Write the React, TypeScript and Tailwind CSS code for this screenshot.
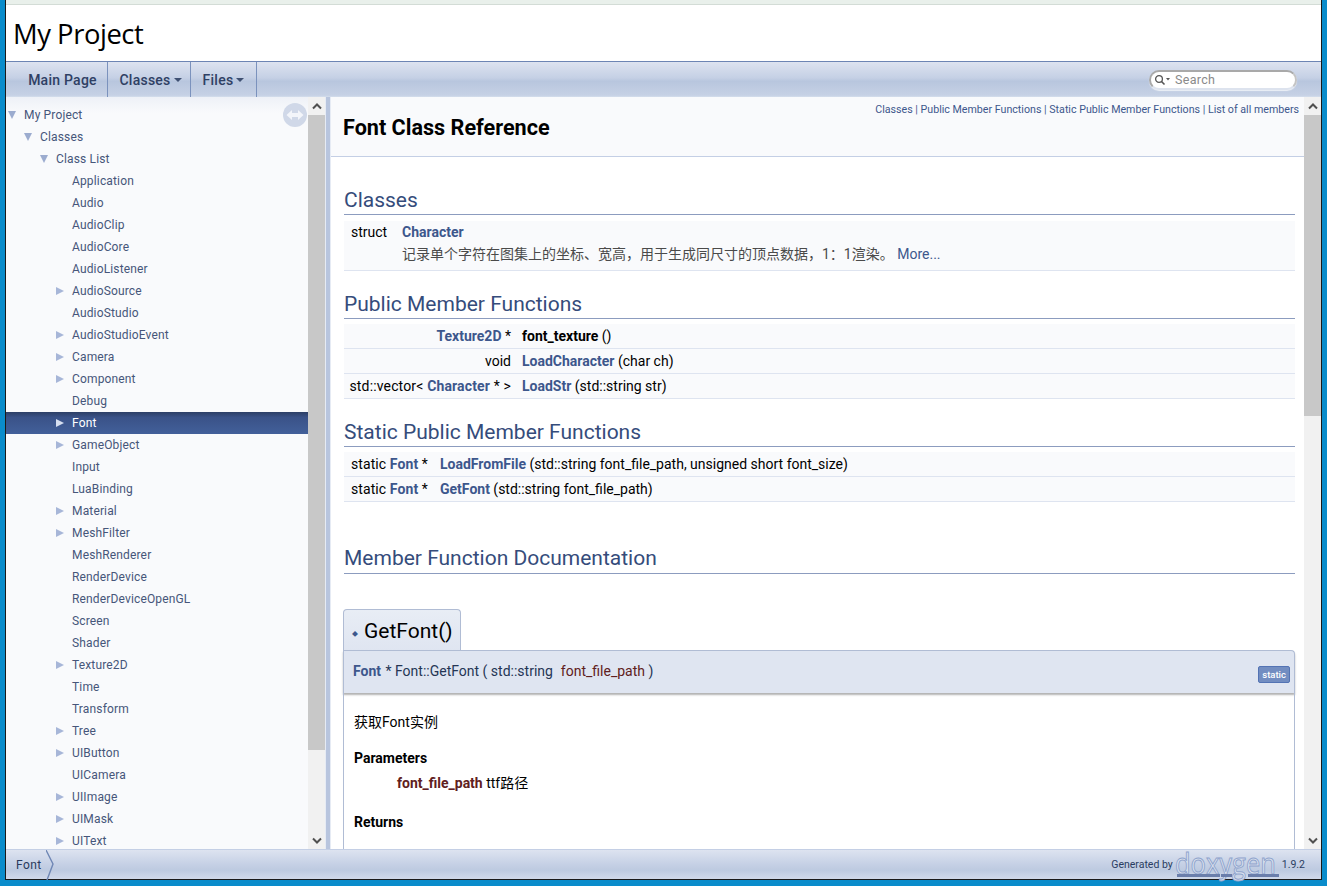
// App.tsx
import React from "react";

const cjk = "font-['Roboto','Noto_Sans_CJK_SC',sans-serif]";

interface TreeItem {
  label: string;
  level: number;
  arrow?: "down" | "right";
  selected?: boolean;
}

const leaf = (label: string): TreeItem => ({ label, level: 3 });
const node = (label: string): TreeItem => ({ label, level: 3, arrow: "right" });

const treeItems: TreeItem[] = [
  { label: "My Project", level: 0, arrow: "down" },
  { label: "Classes", level: 1, arrow: "down" },
  { label: "Class List", level: 2, arrow: "down" },
  leaf("Application"),
  leaf("Audio"),
  leaf("AudioClip"),
  leaf("AudioCore"),
  leaf("AudioListener"),
  node("AudioSource"),
  leaf("AudioStudio"),
  node("AudioStudioEvent"),
  node("Camera"),
  node("Component"),
  leaf("Debug"),
  { label: "Font", level: 3, arrow: "right", selected: true },
  node("GameObject"),
  leaf("Input"),
  leaf("LuaBinding"),
  node("Material"),
  node("MeshFilter"),
  leaf("MeshRenderer"),
  leaf("RenderDevice"),
  leaf("RenderDeviceOpenGL"),
  leaf("Screen"),
  leaf("Shader"),
  node("Texture2D"),
  leaf("Time"),
  leaf("Transform"),
  node("Tree"),
  node("UIButton"),
  leaf("UICamera"),
  node("UIImage"),
  node("UIMask"),
  node("UIText"),
];

const Caret = () => (
  <svg width="8" height="4" viewBox="0 0 8 4" className="ml-[3px] mt-[-1px]">
    <polygon points="0,0 8,0 4,4" fill="#3f5072" />
  </svg>
);

const NavItem = ({ label, caret, w }: { label: string; caret?: boolean; w: string }) => (
  <div
    className={`flex h-full items-center justify-center border-r border-[#7b92bd] pt-[2px] text-[14px] font-medium tracking-[0.25px] text-[#2f4064] ${w}`}
  >
    {label}
    {caret && <Caret />}
  </div>
);

const TreeRow = ({ item }: { item: TreeItem }) => {
  const indent = 18 + item.level * 16;
  return (
    <div
      className={`relative flex h-[22px] items-center text-[12px] tracking-[0.15px] ${
        item.selected
          ? "bg-[linear-gradient(#2c3f66,#3a5288_25%,#42609a)] text-white"
          : "text-[#46567a]"
      }`}
    >
      <div className="flex w-full items-center" style={{ paddingLeft: indent - 16 }}>
        <div className="flex w-[16px] shrink-0 items-center">
          {item.arrow === "down" && (
            <svg width="8" height="8" viewBox="0 0 8 8">
              <polygon points="0,0 8,0 4,8" fill="#9caccf" />
            </svg>
          )}
          {item.arrow === "right" && (
            <svg width="8" height="8" viewBox="0 0 8 8">
              <polygon points="0,0 8,4 0,8" fill={item.selected ? "#d6dff0" : "#a7b6d8"} />
            </svg>
          )}
        </div>
        <span>{item.label}</span>
      </div>
    </div>
  );
};

const ScrollBar = ({ thumbH, left }: { thumbH: string; left?: boolean }) => (
  <div className={`flex h-full w-[17px] shrink-0 flex-col bg-[#f1f1f1] ${left ? "w-[16px]" : ""}`}>
    <div className="flex h-[18px] items-center justify-center bg-[#f1f1f1]">
      <svg width="10" height="7" viewBox="0 0 10 7">
        <path d="M1 5.5 L5 1.5 L9 5.5" stroke="#505050" strokeWidth="2" fill="none" />
      </svg>
    </div>
    <div className={`bg-[#c8c8c8] ${thumbH}`} />
    <div className="flex-1" />
    <div className="flex h-[18px] items-center justify-center">
      <svg width="10" height="7" viewBox="0 0 10 7">
        <path d="M1 1.5 L5 5.5 L9 1.5" stroke="#505050" strokeWidth="2" fill="none" />
      </svg>
    </div>
  </div>
);

const A = ({ children }: { children: React.ReactNode }) => (
  <span className="font-bold text-[#3d578c]">{children}</span>
);

const SectionHead = ({ title, mt }: { title: string; mt: string }) => (
  <div className={`border-b border-[#8c9cbf] pb-[1px] text-[21px] leading-[26px] text-[#354c7b] ${mt}`}>
    {title}
  </div>
);

const Row = ({
  left,
  right,
  leftW,
}: {
  left: React.ReactNode;
  right: React.ReactNode;
  leftW: string;
}) => (
  <div className="flex h-[25px] items-center border-b border-[#dee4f0] bg-[#f9fafc] text-[14px] leading-[24px] text-black">
    <div className={`shrink-0 whitespace-nowrap text-right ${leftW}`}>{left}</div>
    <div className="ml-[11px]">{right}</div>
  </div>
);

export default function App() {
  return (
    <div className="flex h-[886px] w-[1327px] flex-col overflow-hidden bg-[#0a8ccb] font-['Roboto',sans-serif]">
      <div className="ml-[5px] mr-[5px] flex h-[880px] flex-col border-x border-b border-[#1a1a1a] bg-white">
        <div className="h-[5px] shrink-0 border-b border-[#d3dcd6] bg-[#e9f0eb]" />
        {/* title */}
        <div className={`flex h-[56px] shrink-0 items-center pl-[7px] pt-[2px] text-black ${cjk}`}>
          <span className="font-['Open_Sans',sans-serif] text-[27.4px] tracking-[-0.45px]">My Project</span>
        </div>
        {/* nav bar */}
        <div className="flex h-[36px] shrink-0 border-t border-[#6d85b4] bg-[linear-gradient(#dde3f0,#c5d0e5_45%,#b8c6de_55%,#c6d1e5_95%,#d5deec)]">
          <NavItem label="Main Page" w="w-[102px] pl-[12px]" />
          <NavItem label="Classes" caret w="w-[83px] pl-[3px]" />
          <NavItem label="Files" caret w="w-[66px]" />
          <div className="flex-1" />
          <div className="mr-[24px] mt-[8px] flex h-[20px] w-[148px] items-center rounded-[10px] border-2 border-[#a9a9a9] border-r-[#c4c4c4] border-b-[#dde3ee] bg-white pl-[3px] text-[12.5px] tracking-[0.3px] text-[#8a8a8a] shadow-[0_1px_1px_rgba(255,255,255,0.7)]">
            <svg width="17" height="12" viewBox="0 0 17 12">
              <circle cx="5" cy="5" r="3.4" fill="none" stroke="#555" strokeWidth="1.3" />
              <path d="M7.5 7.5 L10.5 10.5" stroke="#555" strokeWidth="1.6" />
              <polygon points="12,4 16,4 14,6.5" fill="#555" />
            </svg>
            <span className="ml-[4px]">Search</span>
          </div>
        </div>

        {/* main */}
        <div className="flex min-h-0 flex-1">
          {/* tree */}
          <div className="relative flex w-[319px] shrink-0">
            <div className="min-w-0 flex-1 overflow-hidden bg-[linear-gradient(#eef1f7,#f9fafc_16px)] pt-[7px]">
              {treeItems.map((item) => (
                <TreeRow key={item.label} item={item} />
              ))}
            </div>
            <ScrollBar thumbH="h-[635px]" left />
            <div className="absolute left-[277px] top-[6px] flex h-[24px] w-[24px] items-center justify-center rounded-full bg-[#d0d8e8]">
              <svg width="18" height="12" viewBox="0 0 18 12">
                <path d="M0.5 6 L6 1 V4 H12 V1 L17.5 6 L12 11 V8 H6 V11 Z" fill="#f3f5fa" />
              </svg>
            </div>
          </div>
          {/* splitter */}
          <div className="w-[6px] shrink-0 border-x border-[#e6ebf4] bg-[#b8c5de]" />

          {/* content */}
          <div className="flex min-w-0 flex-1">
            <div className={`min-w-0 flex-1 overflow-hidden ${cjk}`}>
              <div className="relative h-[60px] border-b border-[#c4cfe5] bg-[#f9fafc]">
                <div className="absolute right-[5px] top-[6px] text-[10.67px] leading-[14px] text-[#3d578c]">
                  Classes | Public Member Functions | Static Public Member Functions | List of all members
                </div>
                <div className="pl-[12px] pt-[17px] text-[21.6px] font-bold leading-[27px] text-black">
                  Font Class Reference
                </div>
              </div>

              <div className="pl-[13px] pr-[9px]">
                <SectionHead title="Classes" mt="mt-[30px]" />
                <div className="mt-[6px] h-[50px] border-b border-[#dee4f0] bg-[#f9fafc] pl-[7px] text-[14px] leading-[22px] text-black">
                  <div className="flex">
                    <span className="w-[51px]">struct</span>
                    <A>Character</A>
                  </div>
                  <div className="ml-[51px] text-[#4a4a4a]">
                    记录单个字符在图集上的坐标、宽高，用于生成同尺寸的顶点数据，1：1渲染。 <span className="text-[#3d578c]">More...</span>
                  </div>
                </div>

                <SectionHead title="Public Member Functions" mt="mt-[20px]" />
                <div className="mt-[5px]">
                  <Row
                    leftW="w-[167px]"
                    left={<><A>Texture2D</A> *</>}
                    right={<><b>font_texture</b> ()</>}
                  />
                  <Row leftW="w-[167px]" left="void" right={<><A>LoadCharacter</A> (char ch)</>} />
                  <Row
                    leftW="w-[167px] tracking-[0.15px]"
                    left={<>std::vector&lt; <A>Character</A> * &gt;</>}
                    right={<><A>LoadStr</A> (std::string str)</>}
                  />
                </div>

                <SectionHead title="Static Public Member Functions" mt="mt-[20px]" />
                <div className="mt-[5px]">
                  <Row
                    leftW="w-[84px] tracking-[0.1px]"
                    left={<>static <A>Font</A> *</>}
                    right={<span className="ml-[1px]"><A>LoadFromFile</A> (std::string font_file_path, unsigned short font_size)</span>}
                  />
                  <Row
                    leftW="w-[84px] tracking-[0.1px]"
                    left={<>static <A>Font</A> *</>}
                    right={<span className="ml-[1px]"><A>GetFont</A> (std::string font_file_path)</span>}
                  />
                </div>

                <div className="mt-[42px] border-b border-[#8c9cbf] pb-[1px] text-[21px] leading-[28px] text-[#354c7b]">
                  Member Function Documentation
                </div>

                {/* member tab */}
                <div className="-ml-[1px] mt-[35px] flex h-[42px] w-[118px] items-center rounded-t-[4px] border border-b-0 border-[#b0bcd4] bg-[linear-gradient(#e8edf5,#dfe5f1)] pl-[8px] pt-[2px] text-[21px] text-black">
                  <span className="mr-[6px] mt-[4px] text-[6px] text-[#3d578c]">◆</span>
                  GetFont()
                </div>
                <div className="-ml-[1px] mt-[-1px] flex h-[43px] items-center justify-between rounded-tr-[4px] border border-b-0 border-[#b0bcd4] bg-[#dfe5f1] pb-[2px] pl-[9px] pr-[4px] text-[14px] text-[#253555] shadow-[0_2px_2px_rgba(0,0,0,0.3)]">
                  <div className="whitespace-pre">
                    <A>Font</A><span className="ml-[1px]"> * Font::GetFont ( std::string  </span><span className="ml-[1px] text-[#602020]">font_file_path</span> )
                  </div>
                  <span className="mt-[7px] rounded-[2px] border border-[#5373b4] bg-[#728dc1] px-[3px] text-[9.5px] font-medium leading-[15px] text-white">
                    static
                  </span>
                </div>
                <div className="-ml-[1px] h-[200px] border-x border-[#b0bcd4] pl-[10px] pt-[20px] text-[14px] leading-[18px] text-black">
                  <div>获取Font实例</div>
                  <div className="mt-[18px] font-bold">Parameters</div>
                  <div className="ml-[43px] mt-[7px]">
                    <span className="font-bold text-[#602020]">font_file_path</span> ttf路径
                  </div>
                  <div className="mt-[21px] font-bold">Returns</div>
                </div>
              </div>
            </div>
            <ScrollBar thumbH="h-[301px]" />
          </div>
        </div>

        {/* footer */}
        <div className="flex h-[30px] shrink-0 items-center border-t border-[#c4cfe5] bg-[linear-gradient(#dde3f0,#c5d0e5_50%,#bdcae0_70%,#d0d9ea)]">
          <span className="ml-[10px] text-[12px] tracking-[0.4px] text-[#283a5d]">Font</span>
          <svg width="10" height="30" viewBox="0 0 10 30" className="ml-[4px]">
            <path d="M0 0 L7 14 L1 30" stroke="#6f87b5" strokeWidth="1.4" fill="none" />
          </svg>
          <div className="flex-1" />
          <span className="text-[10.5px] text-[#2a3d61]">Generated by</span>
          <div className="relative ml-[2px] h-[29px] w-[104px]">
            <span className="absolute left-0 top-[-10px] origin-left font-['Open_Sans',sans-serif] text-[30px] text-[#dbe2ef] [transform:scaleX(0.85)] [-webkit-text-stroke:1px_#8ea3cc]">
              doxygen
            </span>
            <svg width="104" height="4" viewBox="0 0 104 4" className="absolute bottom-[1px] left-0">
              <rect x="2" y="0" width="43" height="3" fill="#6a7eab" />
              <rect x="46" y="0" width="11" height="3" fill="#6a7eab" />
              <rect x="73" y="0" width="31" height="3" fill="#6a7eab" />
            </svg>
          </div>
          <span className="ml-[3px] mr-[16px] text-[10.5px] text-[#2a3d61]">1.9.2</span>
        </div>
      </div>
    </div>
  );
}
